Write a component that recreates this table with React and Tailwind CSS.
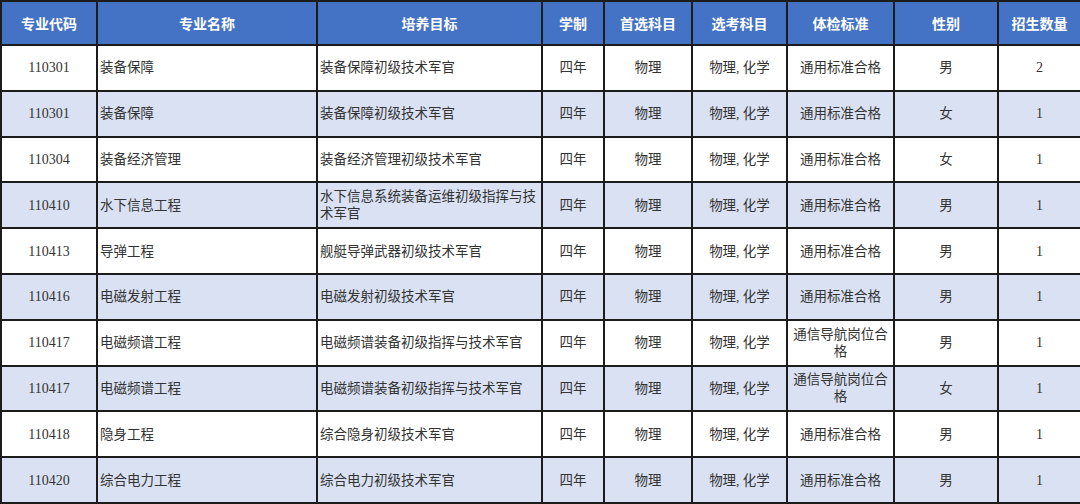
const headers = ["专业代码", "专业名称", "培养目标", "学制", "首选科目", "选考科目", "体检标准", "性别", "招生数量"];

const widths = ["w-[96px]", "w-[220px]", "w-[225px]", "w-[62px]", "w-[88px]", "w-[95px]", "w-[107px]", "w-[104px]", "w-[83px]"];

const rows = [
  ["110301", "装备保障", "装备保障初级技术军官", "男", "2", "通用标准合格"],
  ["110301", "装备保障", "装备保障初级技术军官", "女", "1", "通用标准合格"],
  ["110304", "装备经济管理", "装备经济管理初级技术军官", "女", "1", "通用标准合格"],
  ["110410", "水下信息工程", "水下信息系统装备运维初级指挥与技术军官", "男", "1", "通用标准合格"],
  ["110413", "导弹工程", "舰艇导弹武器初级技术军官", "男", "1", "通用标准合格"],
  ["110416", "电磁发射工程", "电磁发射初级技术军官", "男", "1", "通用标准合格"],
  ["110417", "电磁频谱工程", "电磁频谱装备初级指挥与技术军官", "男", "1", "通信导航岗位合格"],
  ["110417", "电磁频谱工程", "电磁频谱装备初级指挥与技术军官", "女", "1", "通信导航岗位合格"],
  ["110418", "隐身工程", "综合隐身初级技术军官", "男", "1", "通用标准合格"],
  ["110420", "综合电力工程", "综合电力初级技术军官", "男", "1", "通用标准合格"],
];

export default function App() {
  return (
    <div className="w-[1080px] h-[504px] overflow-hidden bg-white">
      <table
        className="w-[1080px] table-fixed border-collapse text-[13.5px] leading-[17px] text-[#333]"
        style={{ fontFamily: '"Liberation Serif", "Noto Sans CJK SC", serif' }}
      >
        <colgroup>
          {widths.map((w, i) => (
            <col key={i} className={w} />
          ))}
        </colgroup>
        <thead>
          <tr className="h-[44px] bg-[#4472c4]">
            {headers.map((h) => (
              <th
                key={h}
                className="border-2 border-[#1c1c1c] font-bold text-white text-[14px] text-center"
                style={{ fontFamily: '"Noto Sans CJK SC", sans-serif' }}
              >
                {h}
              </th>
            ))}
          </tr>
        </thead>
        <tbody>
          {rows.map((r, i) => (
            <tr key={i} className={`h-[45.8px] ${i % 2 === 1 ? "bg-[#d9e1f2]" : "bg-white"}`}>
              <td className="border-2 border-[#1c1c1c] text-center text-[14px]">{r[0]}</td>
              <td className="border-2 border-[#1c1c1c] px-[2px] text-left">{r[1]}</td>
              <td className="border-2 border-[#1c1c1c] px-[2px] text-left">{r[2]}</td>
              <td className="border-2 border-[#1c1c1c] text-center">四年</td>
              <td className="border-2 border-[#1c1c1c] text-center">物理</td>
              <td className="border-2 border-[#1c1c1c] text-center">物理, 化学</td>
              <td className="border-2 border-[#1c1c1c] px-[2px] text-center">{r[5]}</td>
              <td className="border-2 border-[#1c1c1c] text-center">{r[3]}</td>
              <td className="border-2 border-[#1c1c1c] text-center text-[14px]">{r[4]}</td>
            </tr>
          ))}
        </tbody>
      </table>
    </div>
  );
}
